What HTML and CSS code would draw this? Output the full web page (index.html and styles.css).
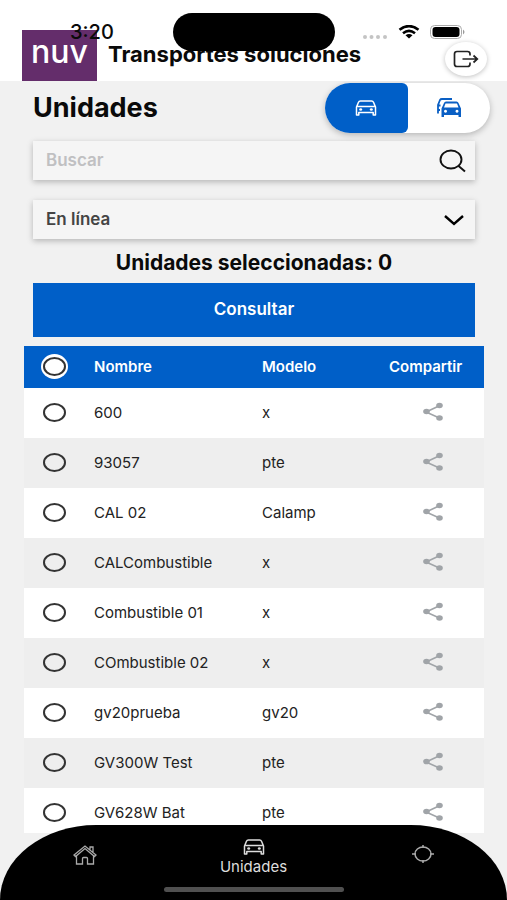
FILE: index.html
```html
<!DOCTYPE html>
<html lang="es">
<head>
<meta charset="utf-8">
<meta name="viewport" content="width=device-width, initial-scale=1">
<title>Unidades</title>
<link rel="stylesheet" href="styles.css">
</head>
<body>
<svg class="defs" aria-hidden="true">
  <symbol id="car" viewBox="0 0 22 16">
    <path d="M1.500 7 3.500 2.200Q4 1 5.400 1H16.600Q18 1 18.500 2.200L20.500 7V15H18.200V12.600H3.800V15H1.500ZM2.500 6.500H19.500" fill="none" stroke="currentColor" stroke-width="1.500" stroke-linejoin="round"/>
    <ellipse cx="5.700" cy="9.500" rx="1.500" ry="1.200" fill="currentColor"/><ellipse cx="16.300" cy="9.500" rx="1.500" ry="1.200" fill="currentColor"/>
  </symbol>
  <symbol id="share" viewBox="0 0 22 20">
    <path d="M18 3.500 4 10l14 6.300" fill="none" stroke="currentColor" stroke-width="1.600"/>
    <ellipse cx="4.500" cy="9.500" rx="3.300" ry="2.800" fill="currentColor"/><ellipse cx="17.500" cy="3.500" rx="3.300" ry="2.800" fill="currentColor"/><ellipse cx="17.500" cy="16" rx="3.300" ry="2.800" fill="currentColor"/>
  </symbol>
</svg>

<div class="status">
  <span class="time">3:20</span>
  <span class="island"></span>
  <span class="signals">
    <svg width="26" height="6" viewBox="0 0 26 6" fill="#c4c4c4"><circle cx="3" cy="3" r="2"/><circle cx="9.500" cy="3" r="2"/><circle cx="16" cy="3" r="2"/><circle cx="23" cy="3" r="2"/></svg>
    <svg width="22" height="14" viewBox="0 0 22 14"><path d="M1.500 4.800Q11-2.600 20.500 4.800M5 8.200Q11 3.400 17 8.200" fill="none" stroke="#000" stroke-width="2.600"/><path d="M7.500 10.300Q11 7.600 14.500 10.300L11 13.500Z"/></svg>
    <svg width="36" height="14" viewBox="0 0 36 14"><rect x=".5" y=".5" width="31" height="13" rx="4" fill="#fff" stroke="#aaa"/><rect x="2.500" y="2" width="27" height="10" rx="3"/><path d="M33 4.500q3 2.500 0 5z" fill="#999"/></svg>
  </span>
</div>

<header class="top">
  <div class="logo">nuv</div>
  <h2 class="company">Transportes soluciones</h2>
  <button class="logout" aria-label="Salir">
    <svg width="26" height="18" viewBox="0 0 26 18" fill="none" stroke="#222" stroke-width="1.700"><path d="M17 5.500V4Q17 1.500 14.500 1.500H4Q1.500 1.500 1.500 4V14Q1.500 16.500 4 16.500H14.500Q17 16.500 17 14V12.500M9.500 9H24M20.500 5.500 24.300 9 20.500 12.500"/></svg>
  </button>
</header>

<main class="content">
  <div class="heading">
    <h1>Unidades</h1>
    <div class="toggle">
      <button class="on" aria-label="Unidad"><svg width="22" height="16"><use href="#car"/></svg></button>
      <button aria-label="Grupos">
        <svg width="26" height="20" viewBox="0 0 26 20" fill="#0a5fc4"><path d="M2 15.500V7L4 2Q4.500 1 6 1H16M2 7.500H4.500M2 12H4" fill="none" stroke="#0a5fc4" stroke-width="1.800"/><path fill-rule="evenodd" d="M5.500 10.500 8 5Q8.500 3.500 10 3.500H20.500Q22 3.500 22.500 5L25 10.500V18.500Q25 19 24.500 19H23Q22.500 19 22.500 18.500V17H8V18.500Q8 19 7.500 19H6Q5.500 19 5.500 18.500ZM9.500 5.500 8 9.500H22.500L21 5.500ZM9.500 11.700a1.500 1.500 0 1 0 .01 0ZM21 11.700a1.500 1.500 0 1 0 .01 0Z"/></svg>
      </button>
    </div>
  </div>

  <div class="controls">
    <label class="field">
      <input type="search" placeholder="Buscar" aria-label="Buscar">
      <svg width="27" height="24" viewBox="0 0 27 24" fill="none" stroke="#111" stroke-width="1.900"><ellipse cx="12" cy="10.500" rx="10.500" ry="9"/><path d="m19 16.500 7 6"/></svg>
    </label>
    <label class="field">
      <select aria-label="Estado"><option>En línea</option></select>
      <svg class="chevron" width="22" height="12" viewBox="0 0 22 12" fill="none" stroke="#000" stroke-width="2.400"><path d="m2 2 9 8L20 2"/></svg>
    </label>
    <p class="count">Unidades seleccionadas: 0</p>
    <button class="submit">Consultar</button>
  </div>

  <table class="units">
    <thead><tr><th class="pick"><span class="halo"><input type="checkbox" aria-label="Seleccionar todas"></span></th><th class="name">Nombre</th><th>Modelo</th><th class="share">Compartir</th></tr></thead>
    <tbody>
      <tr><td class="pick"><input type="checkbox" aria-label="600"></td><td>600</td><td>x</td><td class="share"><button aria-label="Compartir"><svg width="22" height="20"><use href="#share"/></svg></button></td></tr>
      <tr><td class="pick"><input type="checkbox" aria-label="93057"></td><td>93057</td><td>pte</td><td class="share"><button aria-label="Compartir"><svg width="22" height="20"><use href="#share"/></svg></button></td></tr>
      <tr><td class="pick"><input type="checkbox" aria-label="CAL 02"></td><td>CAL 02</td><td>Calamp</td><td class="share"><button aria-label="Compartir"><svg width="22" height="20"><use href="#share"/></svg></button></td></tr>
      <tr><td class="pick"><input type="checkbox" aria-label="CALCombustible"></td><td>CALCombustible</td><td>x</td><td class="share"><button aria-label="Compartir"><svg width="22" height="20"><use href="#share"/></svg></button></td></tr>
      <tr><td class="pick"><input type="checkbox" aria-label="Combustible 01"></td><td>Combustible 01</td><td>x</td><td class="share"><button aria-label="Compartir"><svg width="22" height="20"><use href="#share"/></svg></button></td></tr>
      <tr><td class="pick"><input type="checkbox" aria-label="COmbustible 02"></td><td>COmbustible 02</td><td>x</td><td class="share"><button aria-label="Compartir"><svg width="22" height="20"><use href="#share"/></svg></button></td></tr>
      <tr><td class="pick"><input type="checkbox" aria-label="gv20prueba"></td><td>gv20prueba</td><td>gv20</td><td class="share"><button aria-label="Compartir"><svg width="22" height="20"><use href="#share"/></svg></button></td></tr>
      <tr><td class="pick"><input type="checkbox" aria-label="GV300W Test"></td><td>GV300W Test</td><td>pte</td><td class="share"><button aria-label="Compartir"><svg width="22" height="20"><use href="#share"/></svg></button></td></tr>
      <tr><td class="pick"><input type="checkbox" aria-label="GV628W Bat"></td><td>GV628W Bat</td><td>pte</td><td class="share"><button aria-label="Compartir"><svg width="22" height="20"><use href="#share"/></svg></button></td></tr>
    </tbody>
  </table>
</main>

<nav class="tabs">
  <a href="#inicio" aria-label="Inicio"><svg width="24" height="20" viewBox="0 0 24 20" fill="none" stroke="#aaa" stroke-width="1.300"><path d="M1 10 12 1 23 10 21.500 11.500 12 3.500 2.500 11.500ZM17 4.500V2H20V7M3.500 11V19H9.500V13.500Q9.500 12.500 10.500 12.500H13.500Q14.500 12.500 14.500 13.500V19H20.500V11"/></svg></a>
  <a class="active" href="#unidades"><svg width="22" height="16"><use href="#car"/></svg><span>Unidades</span></a>
  <a href="#mapa" aria-label="Mapa"><svg width="22" height="18" viewBox="0 0 22 18" fill="none" stroke="#aaa" stroke-width="1.500"><ellipse cx="11" cy="9" rx="8" ry="7"/><path d="M11 0V3M11 15V18M0 9H4M18 9H22"/></svg></a>
  <span class="home-bar"></span>
</nav>
</body>
</html>
```
FILE: styles.css
```css
* { box-sizing: border-box; }
body {
  margin: 0;
  height: 100vh;
  display: flex;
  flex-direction: column;
  position: relative;
  overflow: hidden;
  background: #f1f1f1;
  color: #0a0a0a;
  font-family: Inter, "Liberation Sans", sans-serif;
}
h1, h2, p { margin: 0; }
button, input, select { font: inherit; color: inherit; }
button { border: 0; padding: 0; background: none; }
svg { display: block; flex: none; }
.defs { position: absolute; width: 0; height: 0; }

/* Device status bar, floating over the header */
.status {
  position: absolute;
  inset: 0 0 auto;
  z-index: 2;
  height: 64px;
  pointer-events: none;
}
.time { position: absolute; left: 70px; top: 20px; font-size: 20px; line-height: 24px; font-weight: 500; }
.island {
  position: absolute;
  top: 13px;
  left: 50%;
  width: 162px;
  height: 38px;
  margin-left: -81px;
  border-radius: 20px;
  background: #000;
}
.signals { position: absolute; right: 41px; top: 24px; display: flex; align-items: center; gap: 10px; }
.signals svg:first-child { margin-top: 10px; }

.top {
  flex: none;
  height: 81px;
  display: flex;
  align-items: flex-end;
  padding: 0 20px 0 22px;
  background: #fff;
}
.logo {
  width: 75px;
  height: 51px;
  background: #642d6b;
  color: #fff;
  font-size: 32px;
  line-height: 44px;
  font-weight: 500;
  text-align: center;
}
.company { flex: 1; margin-left: 11px; padding-bottom: 14px; font-size: 22px; line-height: 26px; font-weight: 700; white-space: nowrap; }
.logout {
  width: 42px;
  height: 34px;
  margin-bottom: 5px;
  display: grid;
  place-items: center;
  border-radius: 50%;
  background: #fff;
  box-shadow: 0 1px 5px rgba(0, 0, 0, .25);
}

.content { flex: 1; min-height: 0; overflow: hidden; }
.heading { display: flex; justify-content: space-between; padding: 2px 17px 0 33px; }
h1 { font-size: 27px; line-height: 50px; font-weight: 700; }
.toggle {
  display: flex;
  width: 165px;
  height: 50px;
  border-radius: 50px;
  overflow: hidden;
  background: #fff;
  box-shadow: 0 2px 6px rgba(0, 0, 0, .25);
}
.toggle button { flex: 1; display: grid; place-items: center; }
.toggle .on { background: #005fc8; color: #fff; border-radius: 0 6px 6px 0; }

.controls { padding: 8px 32px 0 33px; }
.field {
  display: flex;
  align-items: center;
  height: 39px;
  margin-bottom: 20px;
  padding: 0 9px 0 13px;
  background: #f5f5f5;
  box-shadow: 0 2px 6px rgba(0, 0, 0, .25);
}
.field input, .field select {
  flex: 1;
  min-width: 0;
  height: 39px;
  padding: 0 0 2px;
  border: 0;
  outline: 0;
  appearance: none;
  background: none;
  font-size: 17px;
  font-weight: 600;
  color: #444;
}
.field input::placeholder { color: #c0c0c2; }
.chevron { margin-right: 1px; }
.count { margin-top: -8px; font-size: 21px; line-height: 24px; font-weight: 700; text-align: center; }
.submit {
  display: block;
  width: 100%;
  height: 54px;
  margin-top: 8px;
  padding-bottom: 2px;
  background: #005fc8;
  color: #fff;
  font-size: 17px;
  font-weight: 600;
}

.units {
  width: calc(100% - 47px);
  margin: 9px 23px 0 24px;
  table-layout: fixed;
  border-collapse: collapse;
  font-size: 15px;
}
.units th, .units td { height: 50px; padding: 0 0 2px 9px; text-align: left; }
.units th { height: 42px; background: #005fc8; color: #fff; font-weight: 600; }
.units td { background: #fff; color: #222; }
.units tr:nth-child(even) td { background: #eee; }
.units .pick { width: 61px; padding: 0 0 2px; text-align: center; }
.units .name { width: 168px; }
.units .share { width: 103px; }
.units th.share { padding-left: 8px; }
.units td.share { padding: 0 0 2px; color: #a0a4a8; }
.share button { display: block; margin: 0 auto; }
.pick input {
  display: block;
  width: 23px;
  height: 19px;
  margin: 0 auto;
  appearance: none;
  border: 2px solid #333;
  border-radius: 50%;
  background: #fff;
}
tr:nth-child(even) .pick input { background: transparent; }
.halo { display: grid; place-items: center; width: 27px; height: 25px; margin: 0 auto; border-radius: 50%; background: #fff; }

.tabs {
  position: relative;
  flex: none;
  display: grid;
  grid-template-columns: repeat(3, 1fr);
  height: 75px;
  margin-top: -8px;
  background: #000;
  border-radius: 96px 96px 0 0 / 75px 75px 0 0;
}
.tabs a {
  display: flex;
  flex-direction: column;
  align-items: center;
  padding-top: 20px;
  color: #ddd;
  font-size: 15px;
  line-height: 18px;
  text-decoration: none;
}
.tabs .active { padding-top: 14px; gap: 3px; }
.home-bar {
  position: absolute;
  left: 50%;
  bottom: 8px;
  width: 180px;
  height: 5px;
  margin-left: -90px;
  border-radius: 3px;
  background: #505050;
}
```
